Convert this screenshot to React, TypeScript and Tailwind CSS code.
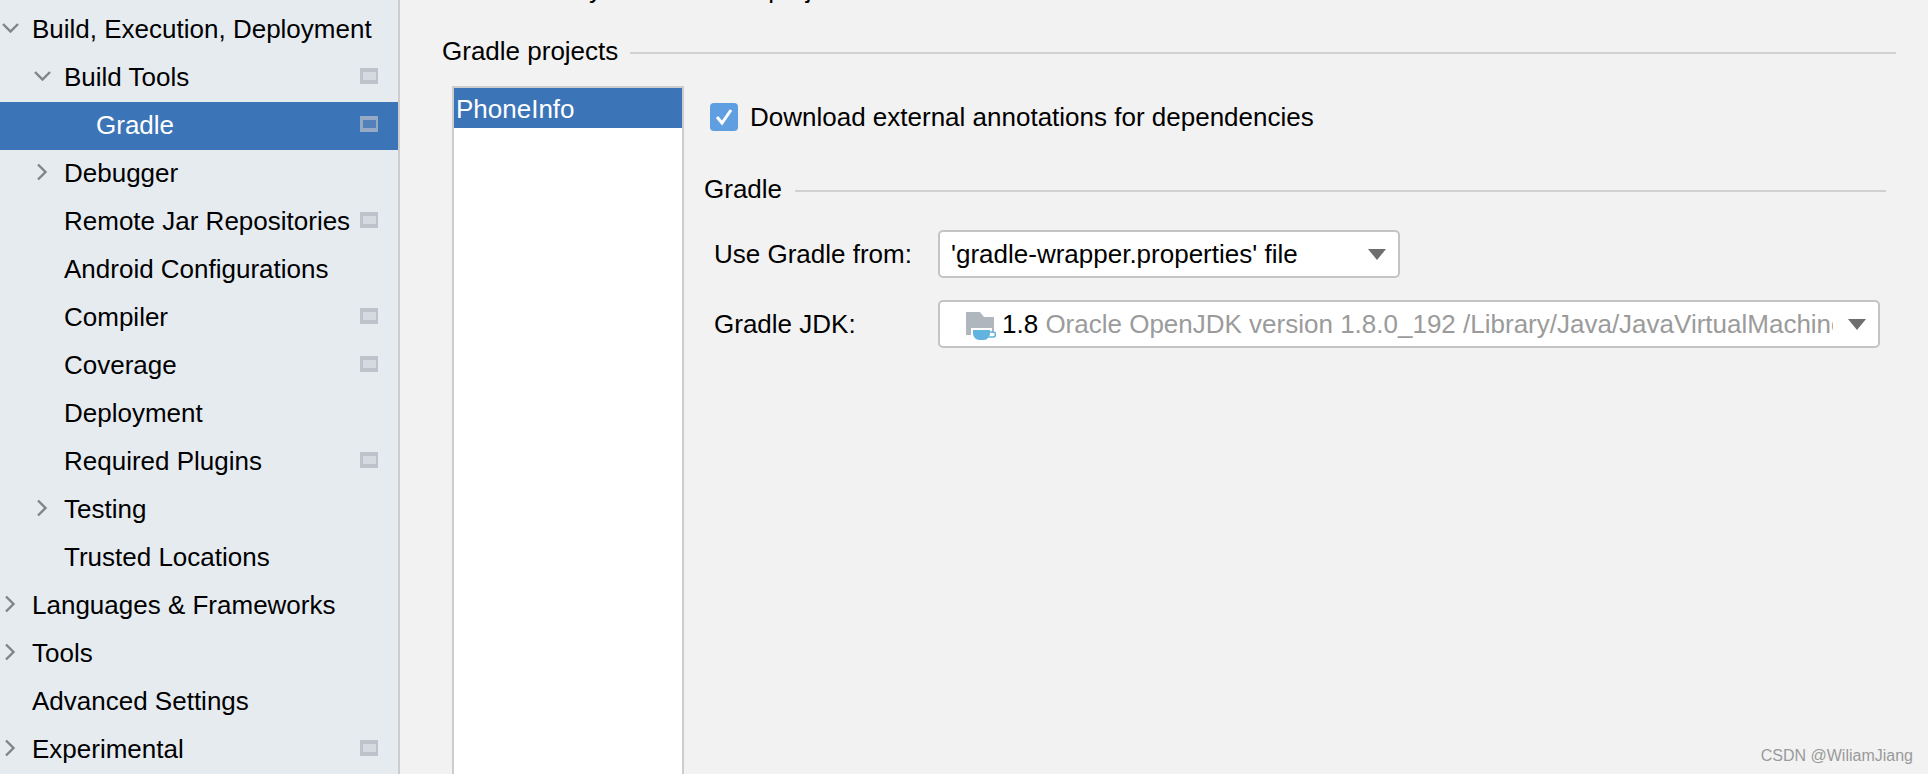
const font = "font-['Liberation_Sans',Arial,sans-serif]";

type Row = { label: string; depth: number; arrow?: "down" | "right"; badge?: boolean; selected?: boolean };

const rows: Row[] = [
  { label: "Build, Execution, Deployment", depth: 0, arrow: "down" },
  { label: "Build Tools", depth: 1, arrow: "down", badge: true },
  { label: "Gradle", depth: 2, badge: true, selected: true },
  { label: "Debugger", depth: 1, arrow: "right" },
  { label: "Remote Jar Repositories", depth: 1, badge: true },
  { label: "Android Configurations", depth: 1 },
  { label: "Compiler", depth: 1, badge: true },
  { label: "Coverage", depth: 1, badge: true },
  { label: "Deployment", depth: 1 },
  { label: "Required Plugins", depth: 1, badge: true },
  { label: "Testing", depth: 1, arrow: "right" },
  { label: "Trusted Locations", depth: 1 },
  { label: "Languages & Frameworks", depth: 0, arrow: "right" },
  { label: "Tools", depth: 0, arrow: "right" },
  { label: "Advanced Settings", depth: 0 },
  { label: "Experimental", depth: 0, arrow: "right", badge: true },
];

const depthPad = ["pl-[32px]", "pl-[64px]", "pl-[96px]"];

function Arrow({ dir }: { dir: "down" | "right" }) {
  return (
    <svg className="absolute -left-[32px] top-[5px] h-5 w-5" viewBox="0 0 20 20" fill="none" stroke="#808387" strokeWidth="2.4">
      {dir === "down" ? <path d="M3 6l7.5 7.5L18 6" /> : <path d="M6 2.5l7.5 7.5L6 17.5" />}
    </svg>
  );
}

function Badge({ selected }: { selected?: boolean }) {
  return (
    <div className={`flex h-4 w-[18px] items-center justify-center ${selected ? "bg-[#95a9c4]" : "bg-[#bcc3ca]"}`}>
      <div className={`h-2 w-[13px] ${selected ? "bg-[#5480ba]" : "bg-[#d5dae0]"}`} />
    </div>
  );
}

function TreeRow({ row }: { row: Row }) {
  return (
    <div className={`flex h-12 items-center justify-between pb-1 pr-[20px] ${depthPad[row.depth]} ${row.selected ? "bg-[#3c74b8] text-white" : "text-black"}`}>
      <div className="relative mt-0.5 whitespace-nowrap">
        {row.arrow && <Arrow dir={row.arrow} />}
        {row.label}
      </div>
      {row.badge && <Badge selected={row.selected} />}
    </div>
  );
}

function Caret() {
  return (
    <svg className="h-[11px] w-[18px] shrink-0" viewBox="0 0 18 11">
      <path d="M0 0h18l-9 11z" fill="#6e6e6e" />
    </svg>
  );
}

function JdkIcon() {
  return (
    <svg className="mt-1 h-7 w-[30px] shrink-0" viewBox="0 0 30 28">
      <path d="M0 0h14l4 5h10v18H0z" fill="#afb6be" />
      <path d="M5 16h21v5h4v7H5z" fill="#fff" />
      <path d="M7 18h17v3c0 4-3 7-6 7h-5c-3 0-6-3-6-7z" fill="#62b3e0" />
      <path d="M24 20h3a2 2 0 010 5h-4" fill="none" stroke="#62b3e0" strokeWidth="1.6" />
    </svg>
  );
}

function Titled({ title, className }: { title: string; className?: string }) {
  return (
    <div className={`flex items-center ${className ?? ""}`}>
      <span className="whitespace-nowrap">{title}</span>
      <div className="mt-1 h-0.5 flex-1 bg-[#d1d1d1]" />
    </div>
  );
}

export default function App() {
  return (
    <div className={`relative flex h-[774px] w-[1928px] overflow-hidden bg-[#f2f2f2] text-[26px] leading-[32px] text-black ${font}`}>
      <aside className="h-full w-[400px] shrink-0 border-r-2 border-[#cdcdcd] bg-[#e6ebf0] pt-1.5">
        {rows.map((r) => (
          <TreeRow key={r.label} row={r} />
        ))}
      </aside>

      <main className="flex min-w-0 flex-1 flex-col pl-[42px]">
        <div className="-mt-[27px] h-[27px] whitespace-nowrap">Available only in the current project</div>

        <Titled title="Gradle projects" className="mt-[35px] mr-[32px] gap-[12px]" />

        <div className="mt-[19px] flex min-h-0 flex-1 pl-[10px]">
          <div className="w-[232px] shrink-0 border-2 border-b-0 border-[#cdcdcd] bg-white">
            <div className="h-10 bg-[#3c74b8] pl-0.5 leading-[42px] text-white">PhoneInfo</div>
          </div>

          <div className="min-w-0 flex-1 pl-[20px] pr-[42px]">
            <div className="mt-[15px] flex items-center gap-[12px] pl-[6px]">
              <div className="flex h-7 w-7 items-center justify-center rounded-[4px] bg-[#5f9ee0]">
                <svg className="h-5 w-5" viewBox="0 0 20 20" fill="none" stroke="#fff" strokeWidth="3">
                  <path d="M3 10l5 6 9-13" />
                </svg>
              </div>
              <span className="whitespace-nowrap">Download external annotations for dependencies</span>
            </div>

            <Titled title="Gradle" className="mt-[40px] gap-[13px]" />

            <div className="mt-[25px] flex items-center pl-[10px]">
              <span className="w-[224px] shrink-0">Use Gradle from:</span>
              <div className="flex h-12 w-[462px] items-center justify-between rounded-[5px] border-2 border-[#c4c4c4] bg-white pl-[11px] pr-[12px]">
                <span className="whitespace-nowrap">'gradle-wrapper.properties' file</span>
                <Caret />
              </div>
            </div>

            <div className="mt-[22px] mr-[6px] flex items-center pl-[10px]">
              <span className="w-[224px] shrink-0">Gradle JDK:</span>
              <div className="flex h-12 min-w-0 flex-1 items-center rounded-[5px] border-2 border-[#c4c4c4] bg-white pl-[26px] pr-[12px]">
                <JdkIcon />
                <div className="ml-[6px] min-w-0 flex-1 overflow-hidden whitespace-nowrap">
                  1.8 <span className="text-[#9b9b9b]">Oracle OpenJDK version 1.8.0_192 /Library/Java/JavaVirtualMachines/jdk1.8.0</span>
                </div>
                <div className="ml-[15px] flex">
                  <Caret />
                </div>
              </div>
            </div>
          </div>
        </div>
      </main>

      <div className="absolute bottom-[8px] right-[15px] text-[16px] leading-[20px] text-[#9a9a9a]">CSDN @WiliamJiang</div>
    </div>
  );
}
